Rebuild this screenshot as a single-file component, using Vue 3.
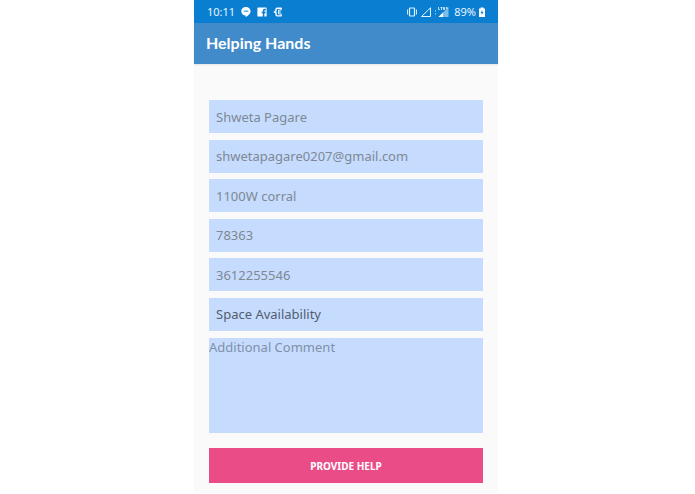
<script setup>
import { ref } from 'vue'

const fields = ref([
  { id: 'name', label: 'Name', type: 'text', value: 'Shweta Pagare' },
  { id: 'email', label: 'Email', type: 'email', value: 'shwetapagare0207@gmail.com' },
  { id: 'address', label: 'Address', type: 'text', value: '1100W corral' },
  { id: 'zip', label: 'Zip code', type: 'text', value: '78363' },
  { id: 'phone', label: 'Phone', type: 'tel', value: '3612255546' }
])
const space = ref('')
const comment = ref('')
</script>

<template>
  <div class="page">
    <div class="phone">
      <div class="status">
        <span class="time">10:11</span>
        <svg class="icon" width="10" height="10" viewBox="0 0 10 10" aria-hidden="true">
          <path d="M5 0A4.600 4.300 0 0 1 9.600 4.300C9.600 6.800 7.300 8.800 4.600 10V8.600A4.500 4.300 0 0 1 5 0Z" fill="#fff" />
          <path d="M2.700 3.600h4.600v1H2.700z" fill="#0a7fd2" />
        </svg>
        <svg class="icon" width="10" height="10" viewBox="0 0 10 10" aria-hidden="true">
          <path d="M1 .5h8a.6.6 0 0 1 .6.6v7.800a.6.6 0 0 1-.6.6H7.400V6.200h1.200l.2-1.500H7.400v-.8c0-.5.2-.7.8-.7h.7V1.800H7.700C6.500 1.800 5.800 2.600 5.800 3.700v1H4.700v1.500h1.100v3.300H1a.6.6 0 0 1-.6-.6V1.100A.6.6 0 0 1 1 .5Z" fill="#fff" />
        </svg>
        <svg class="icon" width="10" height="10" viewBox="0 0 10 10" fill="none" stroke="#fff" aria-hidden="true">
          <path d="M8.500 1.200H4.200Q3 1.200 3 2.400V3.500L1.600 5 3 5.500V7.600Q3 8.900 4.300 8.900H8.500" stroke-width="1.400" />
          <path d="M8.300 1.200V3H5.600V7H8.300V8.900M5.600 5H7.800" stroke-width=".9" />
        </svg>
        <span class="spacer"></span>
        <svg class="vibrate" width="10" height="12" viewBox="0 0 10 12" fill="none" stroke="#e4f4ff" aria-hidden="true">
          <rect x="2.500" y="2" width="5" height="8" rx=".8" stroke-width="1.200" />
          <path d="M.5 3.500v5M9.500 3.500v5" stroke-width=".9" />
        </svg>
        <svg width="12" height="12" viewBox="0 0 12 12" fill="none" stroke="#e4f4ff" aria-hidden="true">
          <path d="M10.500 1.800V10.500H1.500Z" />
        </svg>
        <svg class="lte" width="15" height="12" viewBox="0 0 15 12" aria-hidden="true">
          <path d="M1 4h1v1.500H1zM1 7h1v1.500H1z" fill="#8fcaf0" />
          <path d="M14.500 1V11H4.500Z" fill="#7dbce8" />
          <path d="M9 6.500V11H4.500Z" fill="#fff" />
          <path d="M4.500 1v2.500H6M6.500 1.500h2M7.500 1v3M11 1.500H9.500v2H11M9.500 2.500H11M11.800 2h2M12.800 1v2" fill="none" stroke="#e4f4ff" stroke-width=".8" />
        </svg>
        <span class="battery-level">89%</span>
        <svg width="6" height="10" viewBox="0 0 6 10" aria-hidden="true">
          <path d="M1.500 .5h3v1H6v8.500H0v-8.500H1.500Z" fill="#fff" />
          <path d="M3.500 2.700 1.500 5.900h1.300L2.500 8.200 4.600 5H3.200Z" fill="#0a7fd2" />
        </svg>
      </div>

      <header class="bar">
        <h1>Helping Hands</h1>
      </header>

      <form class="form" @submit.prevent>
        <div class="fields">
          <input
            v-for="field in fields"
            :id="field.id"
            :key="field.id"
            v-model="field.value"
            class="field"
            :type="field.type"
            :aria-label="field.label"
          />
          <input id="space" v-model="space" class="field dark" type="text" placeholder="Space Availability" aria-label="Space Availability" />
        </div>
        <textarea id="comment" v-model="comment" class="comment" placeholder="Additional Comment" aria-label="Additional Comment"></textarea>
        <button class="submit" type="submit">PROVIDE HELP</button>
      </form>
    </div>
  </div>
</template>

<style>
body {
  margin: 0;
  background: #fff;
}
</style>

<style scoped>
.page {
  display: flex;
  justify-content: center;
  padding-right: 3px;
  font-family: "Noto Sans", "Open Sans", sans-serif;
}
.phone {
  flex: 1;
  max-width: 304px;
  background: #fafafa;
}
.status {
  display: flex;
  align-items: center;
  height: 23px;
  padding: 0 13px;
  background: #0a7fd2;
  color: #e8f5ff;
  font-size: 11px;
}
.time {
  margin-right: 6px;
}
.icon {
  margin-right: 6px;
}
.spacer {
  flex: 1;
}
.vibrate {
  margin-right: 3px;
}
.lte {
  margin: 0 5px 0 2px;
}
.battery-level {
  margin-right: 3px;
}
.bar {
  box-sizing: border-box;
  display: flex;
  align-items: center;
  height: 41px;
  padding: 0 12px 2px;
  background: #428bca;
  box-shadow: 0 1px 2px #00000018;
}
h1 {
  margin: 0;
  color: #fff;
  font-family: Lato, "Noto Sans", sans-serif;
  font-size: 16px;
  font-weight: 700;
}
.form {
  display: flex;
  flex-direction: column;
  padding: 36px 15px 10px;
}
.fields {
  display: flex;
  flex-direction: column;
  justify-content: space-between;
  height: 231px;
}
.field,
.comment {
  box-sizing: border-box;
  width: 100%;
  margin: 0;
  border: 0;
  border-radius: 0;
  outline: 0;
  background: #c5dcff;
  color: #7f8893;
  font-family: inherit;
  font-size: 13px;
}
.field {
  height: 33px;
  padding: 0 7px;
}
.field::placeholder,
.comment::placeholder {
  color: #8090a8;
  opacity: 1;
}
.dark::placeholder {
  color: #525d6e;
}
.comment {
  height: 95px;
  margin-top: 7px;
  padding: 0;
  line-height: 18px;
  resize: none;
}
.submit {
  height: 35px;
  margin-top: 15px;
  border: 0;
  background: #ea4c88;
  color: #fff;
  font-family: inherit;
  font-size: 10px;
  font-weight: 700;
}
</style>
